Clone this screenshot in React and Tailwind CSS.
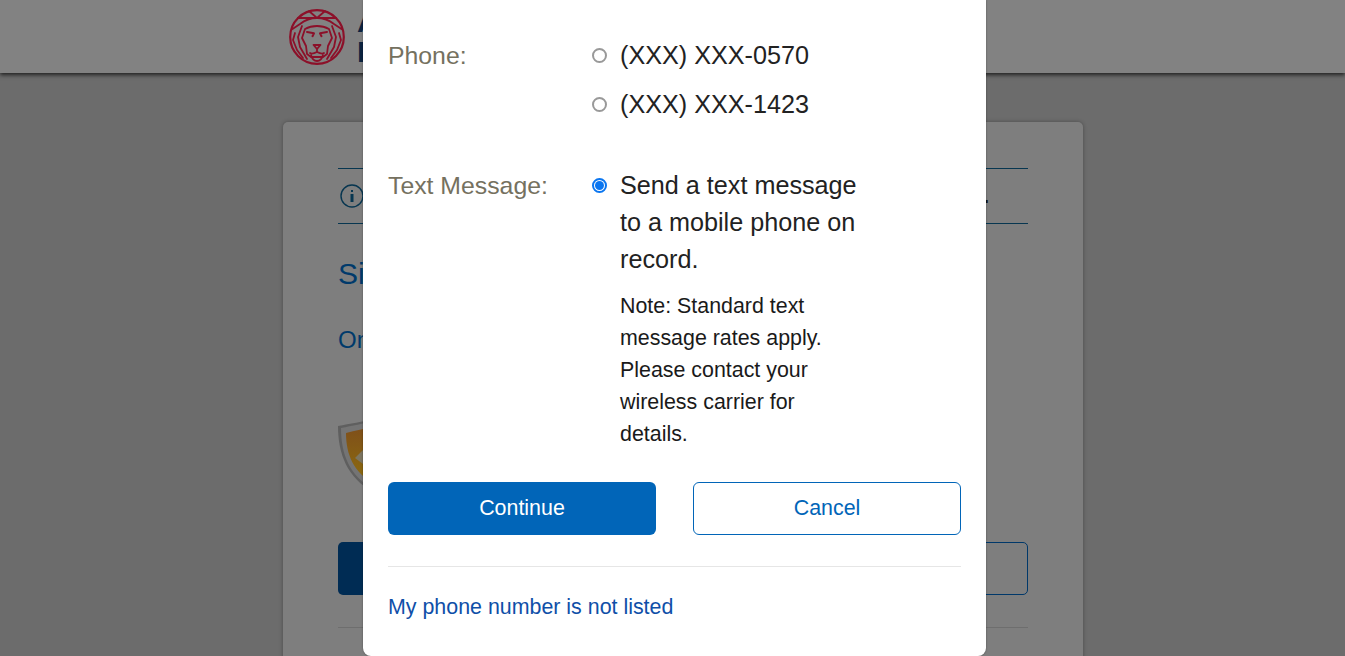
export default function App() {
  const font = { fontFamily: '"Liberation Sans", Arial, sans-serif' };
  return (
    <div style={font} className="relative h-[656px] w-full overflow-hidden bg-[#6c6c6c]">
      <header className="flex h-[73px] items-center bg-[#828282] pl-[289px] shadow-[0_2px_4px_rgba(0,0,0,0.7)]">
        <svg width="56" height="56" viewBox="0 0 56 56" fill="none" stroke="#8c1029" strokeWidth="1.800" strokeLinecap="round" strokeLinejoin="round" className="shrink-0">
          <circle cx="28" cy="28" r="26.800" strokeWidth="2.200" />
          <path d="M20 2 28 9l8-7" />
          <path d="M9 9c6 0 13 0 19 0s13 0 19 0" />
          <path d="M3.500 20 11 15C16 11 22 9 28 9s12 2 17 6l7.500 5" />
          <path d="M13 17l-4 11 2 10 7 12M43 17l4 11-2 10-7 12" />
          <path d="M6 24l-2 7 4 10 6 8M50 24l2 7-4 10-6 8" />
          <path d="M16 20c7-4 17-4 24 0l3 9-4 8-1 8-4 3h-12l-4-3-1-8-4-8z" />
          <path d="M18 23l7 1.200-1.500 3M38 23l-7 1.200 1.500 3" strokeWidth="2" />
          <path d="M24.500 36h7l-3.500 4zM28 40v3M21 44c2 1.500 5 0 7-1 2 1 5 2.500 7 1M22 46c1 4 3 6 6 6s5-2 6-6" />
        </svg>
        <div className="ml-[12px] text-[30px] font-bold leading-[30px] text-[#0c2340]">
          <div>A</div>
          <div>L</div>
        </div>
      </header>

      <main className="ml-[283px] mt-[49px] h-[600px] w-[800px] rounded-[5px] bg-[#7e7e7e] px-[55px] pt-[46px] shadow-[0_0_4px_rgba(0,0,0,0.3)]">
        <div className="flex h-[56px] items-center border-y border-[#073650] pl-[2px] text-[21px] text-[#111]">
          <svg width="24" height="24" viewBox="0 0 24 24" fill="none" className="shrink-0">
            <circle cx="12" cy="12" r="11" stroke="#073650" strokeWidth="1.400" />
            <rect x="10.500" y="10" width="3" height="8" fill="#073650" />
            <rect x="11" y="6" width="2" height="2" fill="#073650" />
          </svg>
          <span className="flex-1 whitespace-nowrap pr-[39px] text-right font-bold">sign in.</span>
        </div>
        <h1 className="mt-[32px] text-[30px] leading-[36px] text-[#003a6b]">Sign In Verification</h1>
        <p className="mt-[34px] text-[24px] leading-[28px] text-[#003a6b]">One more step is needed</p>
        <div className="mt-[66px] h-[72px]">
          <svg width="70" height="72" viewBox="0 0 70 72">
            <defs>
              <linearGradient id="shield" x1="0" y1="0" x2="0" y2="1">
                <stop offset="0" stopColor="#7f4f1a" />
                <stop offset="1" stopColor="#8c6c0e" />
              </linearGradient>
            </defs>
            <path d="M0 6 C12 4 25 1 35 0 C45 1 58 4 70 6 C70 35 60 58 35 72 C10 58 0 35 0 6Z" fill="#5f5f5f" />
            <path d="M3 8 C14 6 26 3 35 2 C44 3 56 6 67 8 C67 35 58 56 35 69 C12 56 3 35 3 8Z" fill="#747474" />
            <path d="M8 13 C17 11 27 8 35 7 C43 8 53 11 62 13 C62 35 54 52 35 63 C16 52 8 35 8 13Z" fill="url(#shield)" />
            <path d="M17 38 L27 28 L25 44Z" fill="#7c7560" />
          </svg>
        </div>
        <div className="mt-[50px] flex h-[53px] justify-between gap-[37px]">
          <button className="h-full w-[335px] rounded-[5px] bg-[#002c54]" />
          <button className="h-full w-[335px] rounded-[5px] border border-[#00386a]" />
        </div>
        <div className="mt-[32px] border-t border-[#6e6e6e]" />
      </main>

      <div role="dialog" className="absolute left-[363px] top-0 h-[656px] w-[623px] rounded-b-[8px] bg-white px-[25px] pt-[37px] shadow-[0_0_2px_rgba(0,0,0,0.4)]">
        <div className="flex">
          <div className="w-[204px] text-[24.800px] leading-[37px] text-[#75715f]">Phone:</div>
          <div className="flex flex-col gap-[12px]">
            <Radio label="(XXX) XXX-0570" />
            <Radio label="(XXX) XXX-1423" />
          </div>
        </div>

        <div className="mt-[44px] flex">
          <div className="w-[204px] text-[24.800px] leading-[37px] text-[#75715f]">Text Message:</div>
          <div className="w-[280px]">
            <Radio checked label="Send a text message to a mobile phone on record." />
            <p className="ml-[28px] mt-[12px] w-[225px] text-[21.400px] leading-[32px] text-[#1a1a1a]">
              Note: Standard text message rates apply. Please contact your wireless carrier for details.
            </p>
          </div>
        </div>

        <div className="mt-[32px] flex h-[53px] justify-between">
          <button className="w-[268px] rounded-[6px] bg-[#0165b8] text-[21.400px] text-white">Continue</button>
          <button className="w-[268px] rounded-[6px] border border-[#0165b8] bg-white text-[21.400px] text-[#0165b8]">Cancel</button>
        </div>
        <div className="mt-[31px] border-t border-[#e6e6e6]" />
        <a href="#" className="mt-[27px] block text-[21.400px] leading-[26px] text-[#0f4fa8]">My phone number is not listed</a>
      </div>
    </div>
  );
}

function Radio({ label, checked }) {
  return (
    <label className="flex items-start">
      <span className="flex h-[37px] w-[28px] shrink-0 items-center">
        <span className={`flex h-[15px] w-[15px] items-center justify-center rounded-full bg-white border-2 ${checked ? "border-[#0b76f0]" : "border-[#999999]"}`}>
          {checked && <span className="h-[9px] w-[9px] rounded-full bg-[#0b76f0]" />}
        </span>
      </span>
      <span className="w-[252px] text-[25.200px] leading-[37px] text-[#222]">{label}</span>
    </label>
  );
}
